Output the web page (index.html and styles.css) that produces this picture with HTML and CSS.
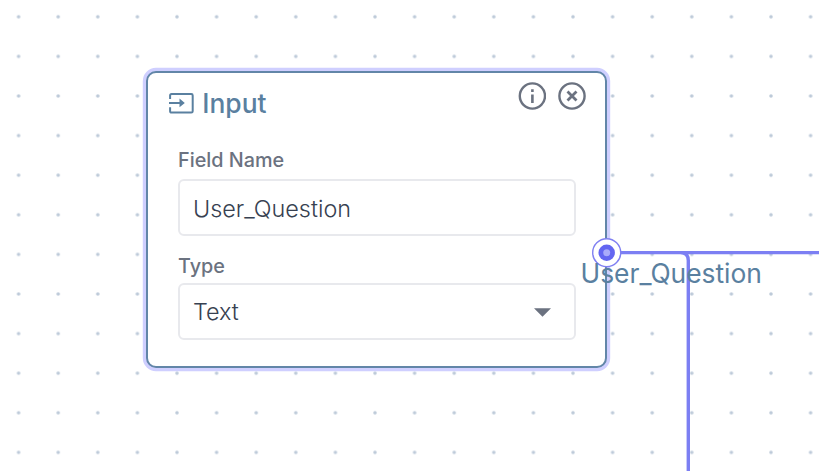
FILE: index.html
```
<!DOCTYPE html>
<html lang="en">
<head>
<meta charset="utf-8">
<title>Flow editor</title>
<link rel="stylesheet" href="styles.css">
</head>
<body>
<main class="canvas">
  <svg class="layer" width="819" height="471">
    <defs>
      <pattern id="dots" x="-1.2" y="-3" width="39.6" height="39.6" patternUnits="userSpaceOnUse">
        <circle cx="19.8" cy="19.8" r="1.8" fill="#bdcad9"/>
      </pattern>
    </defs>
    <rect width="819" height="471" fill="url(#dots)"/>
    <path class="edge" d="M607 252.6H819M607 252.6H680.3Q688.3 252.6 688.3 260.6V471"/>
  </svg>
  <section class="node">
    <header class="node-header">
      <svg class="input-icon" width="25" height="21" viewBox="0 0 25 21">
        <path d="M1.1 6V2.5Q1.1 1.1 2.5 1.1H22.3Q23.7 1.1 23.7 2.5V18.2Q23.7 19.5 22.3 19.5H2.5Q1.1 19.5 1.1 18.2V14.3" fill="none" stroke="#5a80a0" stroke-width="2"/>
        <path d="M0 8.9H10.5V5.6L15.8 9.9L10.5 14.2V10.9H0Z" fill="#5a80a0"/>
      </svg>
      <h1 class="title">Input</h1>
      <div class="actions">
        <svg width="28" height="28" viewBox="0 0 28 28">
          <circle cx="14.4" cy="14" r="12.6" fill="none" stroke="#6b7280" stroke-width="2.4"/>
          <path d="M13.1 7.2H15.7V9.9H13.1ZM13.1 12.4H15.7V21H13.1Z" fill="#6b7280"/>
        </svg>
        <svg width="28" height="28" viewBox="0 0 28 28">
          <circle cx="14" cy="14" r="12.6" fill="none" stroke="#6b7280" stroke-width="2.4"/>
          <path d="M9.5 9.5L18.5 18.5M18.5 9.5L9.5 18.5" stroke="#6b7280" stroke-width="2.8"/>
        </svg>
      </div>
    </header>
    <div class="fields">
      <div class="label">Field Name</div>
      <div class="control"><span>User_Question</span></div>
      <div class="label label-type">Type</div>
      <div class="control select"><span>Text</span>
        <svg class="caret" width="17" height="9" viewBox="0 0 17 9"><path d="M0 .3H17L8.5 8.8Z" fill="#6b7280"/></svg>
      </div>
    </div>
  </section>
  <svg class="port" width="30" height="30" viewBox="0 0 30 30">
    <circle cx="14.7" cy="14.7" r="14" fill="#fff" stroke="#8080f2" stroke-width="1.4"/>
    <circle cx="14.7" cy="14.7" r="8.2" fill="#6366f1"/>
    <circle cx="14.7" cy="14.7" r="3.5" fill="#a9abfa"/>
  </svg>
  <div class="port-label">User_Question</div>
</main>
</body>
</html>
```
FILE: styles.css
```
* { box-sizing: border-box; }
body { margin: 0; background: #fff; font-family: Inter, sans-serif; }
.canvas { position: relative; width: 819px; height: 471px; overflow: hidden; }
.layer { position: absolute; left: 0; top: 0; }
.edge { fill: none; stroke: #7c7ff3; stroke-width: 3.4; }
.node {
  position: absolute; left: 146px; top: 71px; width: 461px; height: 297px;
  background: #fff; border: 2px solid #6286a8; border-radius: 10px;
  box-shadow: 0 0 0 3.2px #cfcfff;
}
.node-header { display: flex; height: 74px; padding: 20px 19px 0 21px; align-items: flex-start; }
.input-icon { flex: none; }
.title { margin: -6px 0 0 8.3px; font-size: 26.4px; line-height: 32px; font-weight: 550; color: #5a80a0; }
.actions { display: flex; gap: 12px; margin: -11px 0 0 auto; }
.fields { padding: 0 29px 0 30px; }
.label { height: 32px; font-size: 19.8px; line-height: 26px; font-weight: 500; color: #6b7280; }
.label-type { margin-top: 17px; height: 30px; }
.control {
  display: flex; align-items: center; justify-content: space-between;
  height: 57px; padding: 1px 23px 0 13px; border: 2px solid #e8e9ed; border-radius: 6px;
  font-size: 23.4px; color: #374151; font-weight: 350;
}
.select { padding-top: 0; padding-bottom: 1px; }
.caret { margin-top: 3px; }
.port { position: absolute; left: 592px; top: 238px; }
.port-label { position: absolute; left: 580.5px; top: 256px; font-size: 26.4px; line-height: 34px; font-weight: 370; color: #5a80a0; white-space: nowrap; }
```
